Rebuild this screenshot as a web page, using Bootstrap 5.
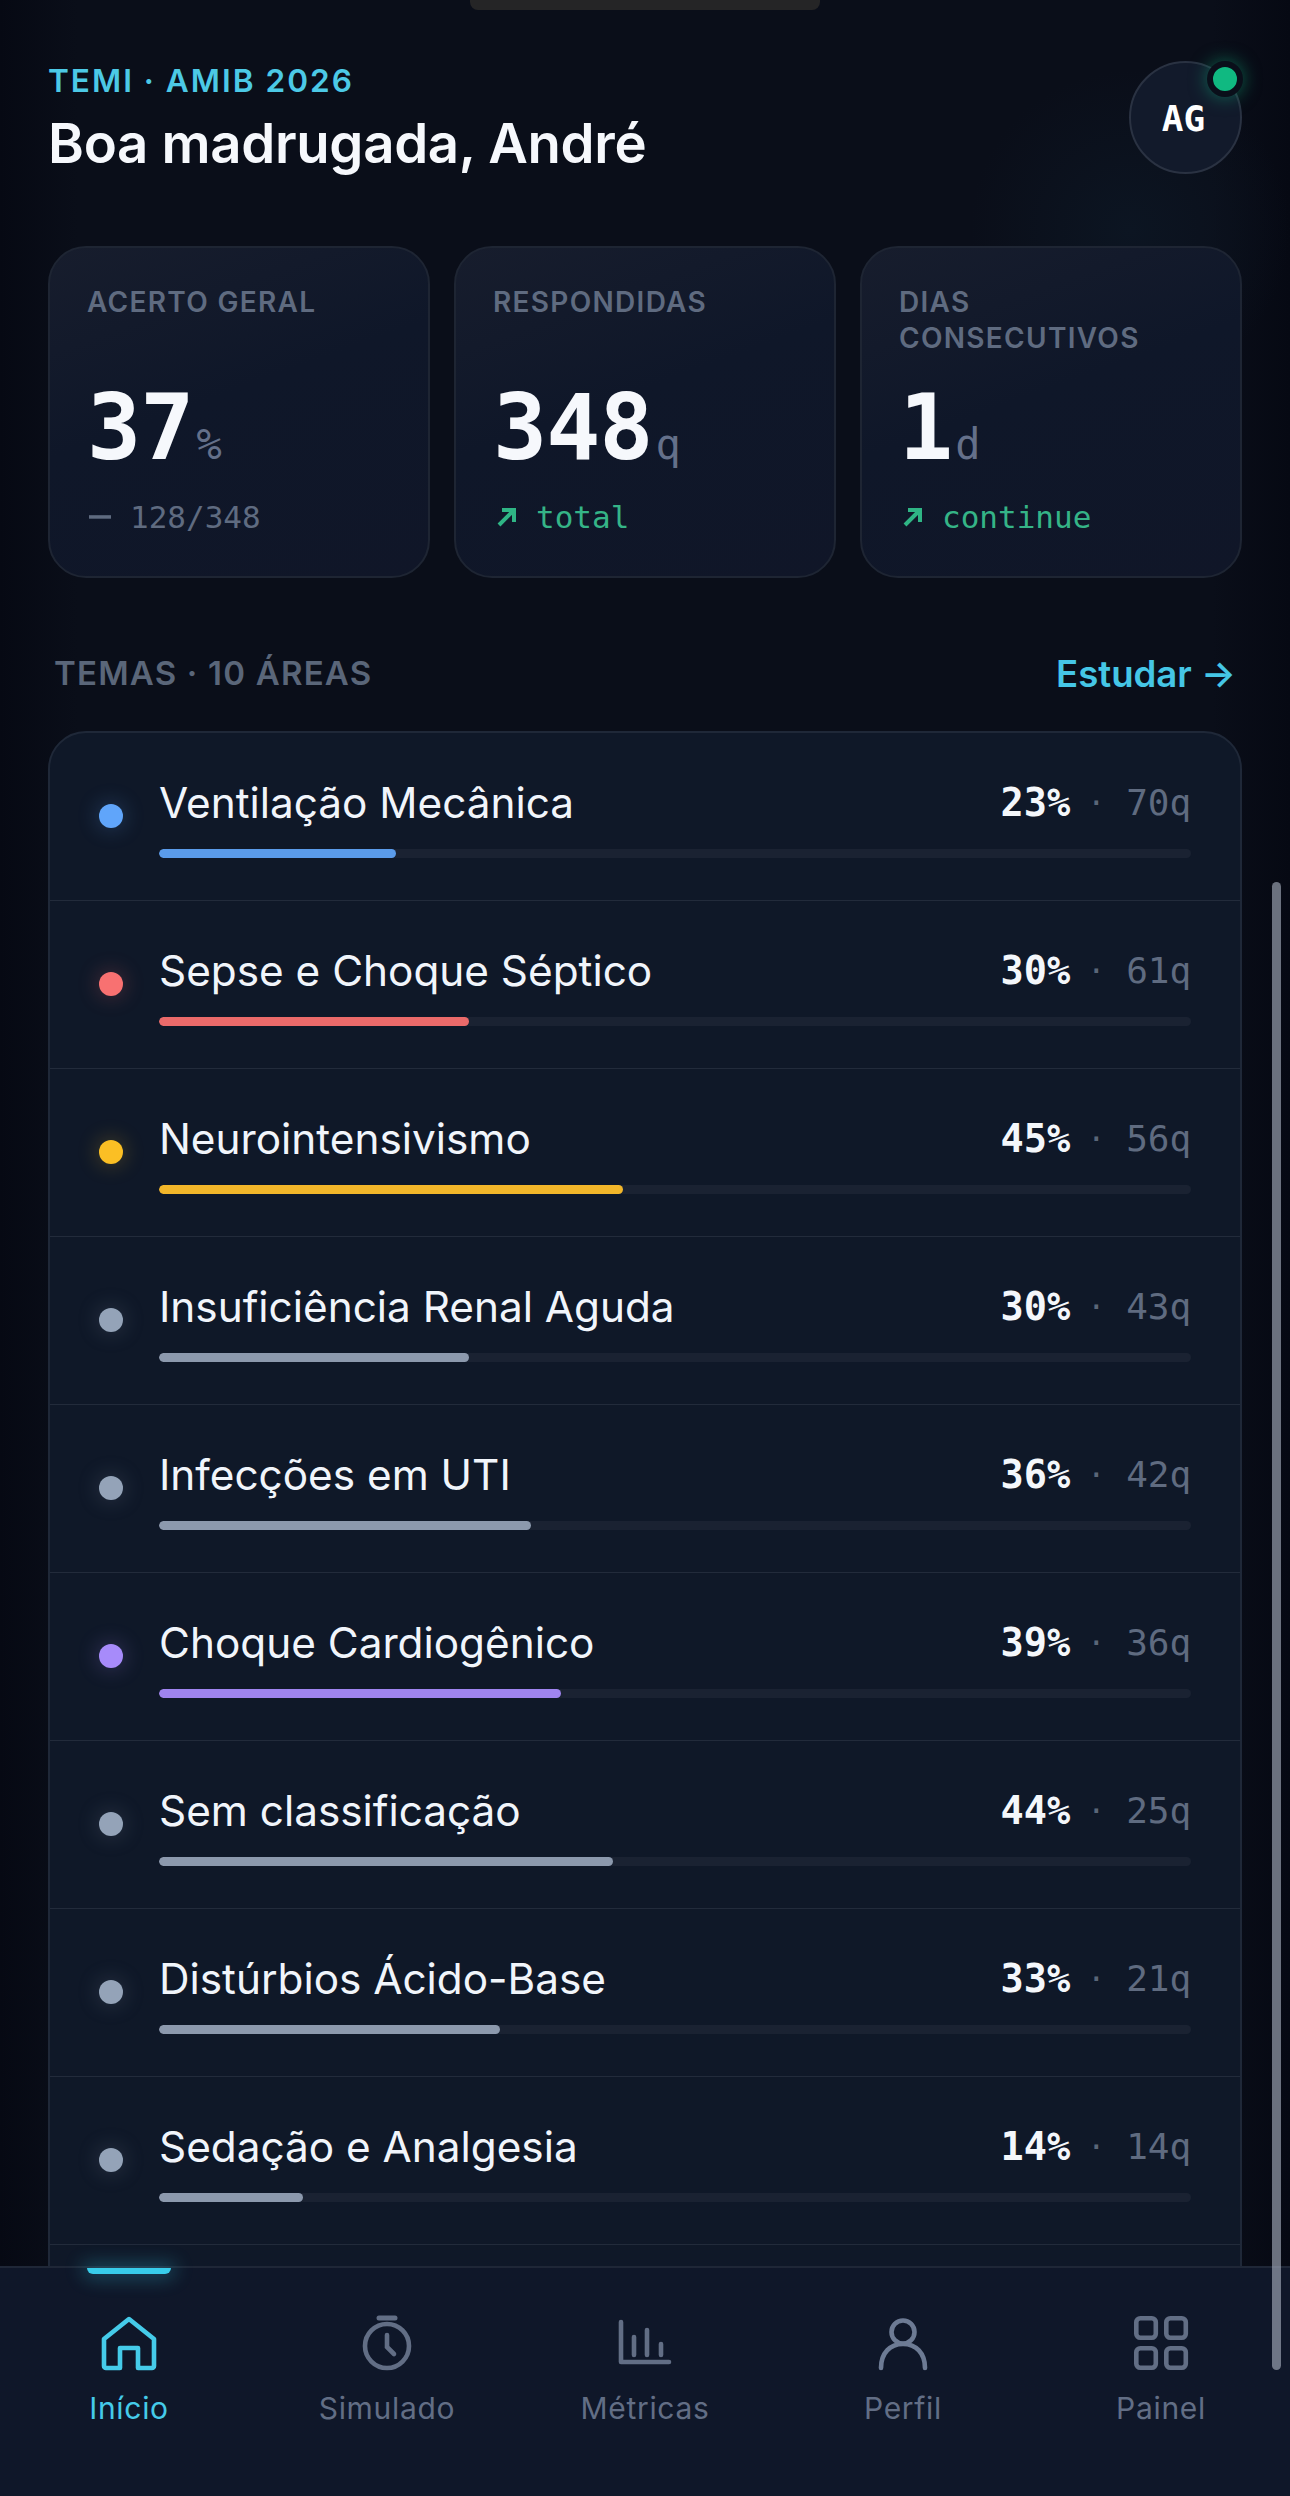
<!DOCTYPE html>
<html lang="pt-BR">
<head>
<meta charset="utf-8">
<title>TEMI</title>
<link href="https://cdn.jsdelivr.net/npm/bootstrap@5.3.0/dist/css/bootstrap.min.css" rel="stylesheet">
<style>
html,body{margin:0;height:2496px;overflow:hidden;background:#090d18;font-family:Inter,"Liberation Sans",sans-serif}
.app-shell{height:2496px;position:relative;background:radial-gradient(circle 160px at 1130px 230px,#0c1522 0,rgba(12,21,34,0) 100%),linear-gradient(90deg,#060913 0,#0a0e19 6%,#0a0e19 94%,#060913 100%)}
.notch{position:absolute;left:470px;top:0;width:350px;height:10px;background:#252526;border-radius:0 0 8px 8px}
.scroll-area{flex:1 1 auto;min-height:0;overflow:hidden;padding:61px 48px 0}
.eyebrow{font-size:31.6px;line-height:40px;font-weight:600;letter-spacing:2px;color:#4cc9e6}
.hello{font-size:54.500px;line-height:64px;font-weight:600;color:#f6f8fc;letter-spacing:-.3px;margin:10px 0 0}
.avatar{width:113px;height:113px;border-radius:50%;border:2px solid #2a3242;background:#121a2b;color:#fff;font:700 36px/1 "DejaVu Sans Mono",monospace;position:relative;padding:2px 4px 0 0}
.online{position:absolute;right:-3px;top:-2px;width:36px;height:36px;border-radius:50%;background:#10b981;border:6px solid #0a0f1a;box-shadow:0 0 18px rgba(16,185,129,.5)}
.stats{margin-top:47px}
.stat-tile{height:332px;border-radius:38px;border:2px solid #1e2533;background:linear-gradient(160deg,#171d2d 0,#0f1729 45%,#101628 100%);padding:36px 37px 0}
.stat-label{height:72px;font-size:28px;line-height:36px;font-weight:600;letter-spacing:1.3px;color:#5f6b80}
.stat-num{margin-top:24px;font:700 90px/96px "DejaVu Sans Mono",monospace;color:#f6f8fc;letter-spacing:-1px;white-space:nowrap}
.stat-unit{font:400 42px/1 "DejaVu Sans Mono",monospace;color:#64708a;margin-left:3px;letter-spacing:0}
.stat-sub{margin-top:21px;font:400 31px/40px "DejaVu Sans Mono",monospace;letter-spacing:0;white-space:nowrap}
.stat-sub svg{margin:0 3px 0 2px}
.tone-muted{color:#5f6b80}.tone-up{color:#35b487}
.sec-head{margin-top:71px;padding:0 6px;height:50px}
.sec-title{font-size:33px;font-weight:600;letter-spacing:1.2px;color:#5a6679}
.sec-link{font-size:36.6px;font-weight:600;color:#45c6e6;text-decoration:none}
.topic-panel{margin-top:32px;border:2px solid #1f2838;border-radius:38px 38px 0 0;background:#0f1828;overflow:hidden}
.topic-row{height:168px;padding:0 49px 0 48px;background:transparent;border-color:#222b3b;border-width:0 0 2px;color:#f1f5fb}
.topic-dot{width:24px;height:24px;border-radius:50%;margin:71px 0 0 1px;flex:none}
.topic-body{margin-left:36px;padding-top:46px}
.topic-name{font-size:42.3px;line-height:48px;font-weight:400;color:#f1f5fb}
.topic-pct{font:700 38.6px/48px "DejaVu Sans Mono",monospace;color:#f4f7fb;letter-spacing:0}
.topic-sep{font:400 30px/48px "DejaVu Sans Mono",monospace;color:#5a6679;margin:0 21px 0 17px}
.topic-q{font:400 36px/48px "DejaVu Sans Mono",monospace;color:#5f6b80;letter-spacing:-.1px}
.topic-track{height:9px;margin-top:22px;background:#1a2232;border-radius:5px}
.topic-fill{border-radius:5px}
.tabbar{height:230px;flex:none;border-top:2px solid #1f2737;background:#0f1729;position:relative;z-index:2}
.tab-item{flex:1 1 0;padding-top:47px;text-decoration:none;color:#626e85;font-size:30px;line-height:40px;position:relative;letter-spacing:.7px}
.tab-item svg{display:block;margin-bottom:13px}
.tab-on{color:#45cbe9}
.tab-mark{position:absolute;left:87px;top:0;width:84px;height:6px;background:#38cdeb;border-radius:0 0 6px 6px;box-shadow:0 0 18px 5px rgba(56,205,235,.28)}
.scroll-thumb{position:absolute;left:1272px;top:882px;width:9px;height:1488px;border-radius:5px;background:rgba(170,178,192,.62);z-index:3}
</style>
</head>
<body>
<div class="app-shell d-flex flex-column">
  <div class="notch"></div>
  <div class="scroll-area">
    <header class="d-flex justify-content-between align-items-start">
      <div>
        <div class="eyebrow">TEMI · AMIB 2026</div>
        <h1 class="hello">Boa madrugada, André</h1>
      </div>
      <div class="avatar d-flex align-items-center justify-content-center">AG<span class="online"></span></div>
    </header>

    <div class="row g-4 stats">
      <div class="col-4"><div class="stat-tile">
        <div class="stat-label">ACERTO GERAL</div>
        <div class="stat-num">37<span class="stat-unit">%</span></div>
        <div class="stat-sub tone-muted d-flex align-items-center gap-3"><svg width="22" height="4" viewBox="0 0 22 4"><rect width="22" height="3.500" y=".2" fill="#5f6b80"/></svg>128/348</div>
      </div></div>
      <div class="col-4"><div class="stat-tile">
        <div class="stat-label">RESPONDIDAS</div>
        <div class="stat-num">348<span class="stat-unit">q</span></div>
        <div class="stat-sub tone-up d-flex align-items-center gap-3"><svg width="22" height="22" viewBox="0 0 22 22" fill="none" stroke="#2fb585" stroke-width="4"><path d="M4 19 18 5M7 4h12v12"/></svg>total</div>
      </div></div>
      <div class="col-4"><div class="stat-tile">
        <div class="stat-label">DIAS CONSECUTIVOS</div>
        <div class="stat-num">1<span class="stat-unit">d</span></div>
        <div class="stat-sub tone-up d-flex align-items-center gap-3"><svg width="22" height="22" viewBox="0 0 22 22" fill="none" stroke="#2fb585" stroke-width="4"><path d="M4 19 18 5M7 4h12v12"/></svg>continue</div>
      </div></div>
    </div>

    <div class="sec-head d-flex justify-content-between align-items-center">
      <span class="sec-title">TEMAS · 10 ÁREAS</span>
      <a class="sec-link" href="#">Estudar →</a>
    </div>

    <div class="topic-panel list-group list-group-flush">
      <div class="topic-row list-group-item d-flex"><span class="topic-dot" style="background:#60a5fa;box-shadow:0 0 22px rgba(96,165,250,.3)"></span><div class="topic-body flex-grow-1"><div class="d-flex align-items-center"><span class="topic-name flex-grow-1">Ventilação Mecânica</span><span class="topic-pct">23%</span><span class="topic-sep">·</span><span class="topic-q">70q</span></div><div class="progress topic-track"><div class="progress-bar topic-fill" style="width:23%;background:#5a9bea"></div></div></div></div>
      <div class="topic-row list-group-item d-flex"><span class="topic-dot" style="background:#f87171;box-shadow:0 0 22px rgba(248,113,113,.3)"></span><div class="topic-body flex-grow-1"><div class="d-flex align-items-center"><span class="topic-name flex-grow-1">Sepse e Choque Séptico</span><span class="topic-pct">30%</span><span class="topic-sep">·</span><span class="topic-q">61q</span></div><div class="progress topic-track"><div class="progress-bar topic-fill" style="width:30%;background:#ea6a6a"></div></div></div></div>
      <div class="topic-row list-group-item d-flex"><span class="topic-dot" style="background:#fbbf24;box-shadow:0 0 22px rgba(251,191,36,.3)"></span><div class="topic-body flex-grow-1"><div class="d-flex align-items-center"><span class="topic-name flex-grow-1">Neurointensivismo</span><span class="topic-pct">45%</span><span class="topic-sep">·</span><span class="topic-q">56q</span></div><div class="progress topic-track"><div class="progress-bar topic-fill" style="width:45%;background:#f2b62a"></div></div></div></div>
      <div class="topic-row list-group-item d-flex"><span class="topic-dot" style="background:#94a3b8;box-shadow:0 0 22px rgba(148,163,184,.25)"></span><div class="topic-body flex-grow-1"><div class="d-flex align-items-center"><span class="topic-name flex-grow-1">Insuficiência Renal Aguda</span><span class="topic-pct">30%</span><span class="topic-sep">·</span><span class="topic-q">43q</span></div><div class="progress topic-track"><div class="progress-bar topic-fill" style="width:30%;background:#8c99ad"></div></div></div></div>
      <div class="topic-row list-group-item d-flex"><span class="topic-dot" style="background:#94a3b8;box-shadow:0 0 22px rgba(148,163,184,.25)"></span><div class="topic-body flex-grow-1"><div class="d-flex align-items-center"><span class="topic-name flex-grow-1">Infecções em UTI</span><span class="topic-pct">36%</span><span class="topic-sep">·</span><span class="topic-q">42q</span></div><div class="progress topic-track"><div class="progress-bar topic-fill" style="width:36%;background:#8c99ad"></div></div></div></div>
      <div class="topic-row list-group-item d-flex"><span class="topic-dot" style="background:#a78bfa;box-shadow:0 0 22px rgba(167,139,250,.3)"></span><div class="topic-body flex-grow-1"><div class="d-flex align-items-center"><span class="topic-name flex-grow-1">Choque Cardiogênico</span><span class="topic-pct">39%</span><span class="topic-sep">·</span><span class="topic-q">36q</span></div><div class="progress topic-track"><div class="progress-bar topic-fill" style="width:39%;background:#9f84ef"></div></div></div></div>
      <div class="topic-row list-group-item d-flex"><span class="topic-dot" style="background:#94a3b8;box-shadow:0 0 22px rgba(148,163,184,.25)"></span><div class="topic-body flex-grow-1"><div class="d-flex align-items-center"><span class="topic-name flex-grow-1">Sem classificação</span><span class="topic-pct">44%</span><span class="topic-sep">·</span><span class="topic-q">25q</span></div><div class="progress topic-track"><div class="progress-bar topic-fill" style="width:44%;background:#8c99ad"></div></div></div></div>
      <div class="topic-row list-group-item d-flex"><span class="topic-dot" style="background:#94a3b8;box-shadow:0 0 22px rgba(148,163,184,.25)"></span><div class="topic-body flex-grow-1"><div class="d-flex align-items-center"><span class="topic-name flex-grow-1">Distúrbios Ácido-Base</span><span class="topic-pct">33%</span><span class="topic-sep">·</span><span class="topic-q">21q</span></div><div class="progress topic-track"><div class="progress-bar topic-fill" style="width:33%;background:#8c99ad"></div></div></div></div>
      <div class="topic-row list-group-item d-flex"><span class="topic-dot" style="background:#94a3b8;box-shadow:0 0 22px rgba(148,163,184,.25)"></span><div class="topic-body flex-grow-1"><div class="d-flex align-items-center"><span class="topic-name flex-grow-1">Sedação e Analgesia</span><span class="topic-pct">14%</span><span class="topic-sep">·</span><span class="topic-q">14q</span></div><div class="progress topic-track"><div class="progress-bar topic-fill" style="width:14%;background:#8c99ad"></div></div></div></div>
      <div class="topic-row list-group-item d-flex"></div>
    </div>
  </div>

  <nav class="tabbar d-flex">
    <a class="tab-item tab-on d-flex flex-column align-items-center" href="#">
      <svg width="60" height="60" viewBox="0 0 60 60" fill="none" stroke="#45cbe9" stroke-width="4.6" stroke-linejoin="round"><path d="M30 4 5 24v27a2 2 0 0 0 2 2h14V33h18v20h14a2 2 0 0 0 2-2V24Z"/></svg>Início</a>
    <a class="tab-item d-flex flex-column align-items-center" href="#">
      <svg width="60" height="60" viewBox="0 0 60 60" fill="none" stroke="#626e85" stroke-width="4.6" stroke-linecap="round"><path d="M22 3h16" stroke-width="5"/><circle cx="30" cy="31" r="22"/><path d="M30 20v12l7 7"/></svg>Simulado</a>
    <a class="tab-item d-flex flex-column align-items-center" href="#">
      <svg width="60" height="60" viewBox="0 0 60 60" fill="none" stroke="#626e85" stroke-width="4.6" stroke-linecap="round" stroke-linejoin="round"><path d="M6 7v40h48"/><path d="M19 22v18M32 15v25M46 29v11"/></svg>Métricas</a>
    <a class="tab-item d-flex flex-column align-items-center" href="#">
      <svg width="60" height="60" viewBox="0 0 60 60" fill="none" stroke="#6d7b94" stroke-width="4.6" stroke-linecap="round"><circle cx="30" cy="17" r="11.500"/><path d="M8 53c0-15 9-24 22-24s22 9 22 24"/></svg>Perfil</a>
    <a class="tab-item d-flex flex-column align-items-center" href="#">
      <svg width="60" height="60" viewBox="0 0 60 60" fill="none" stroke="#626e85" stroke-width="4.6"><rect x="5.300" y="3.300" width="19.500" height="19.500" rx="4"/><rect x="35.300" y="3.300" width="19.500" height="19.500" rx="4"/><rect x="5.300" y="33.300" width="19.500" height="19.500" rx="4"/><rect x="35.300" y="33.300" width="19.500" height="19.500" rx="4"/></svg>Painel</a>
    <span class="tab-mark"></span>
  </nav>
  <div class="scroll-thumb"></div>
</div>
<script src="https://cdn.jsdelivr.net/npm/bootstrap@5.3.0/dist/js/bootstrap.bundle.min.js"></script>
</body>
</html>
